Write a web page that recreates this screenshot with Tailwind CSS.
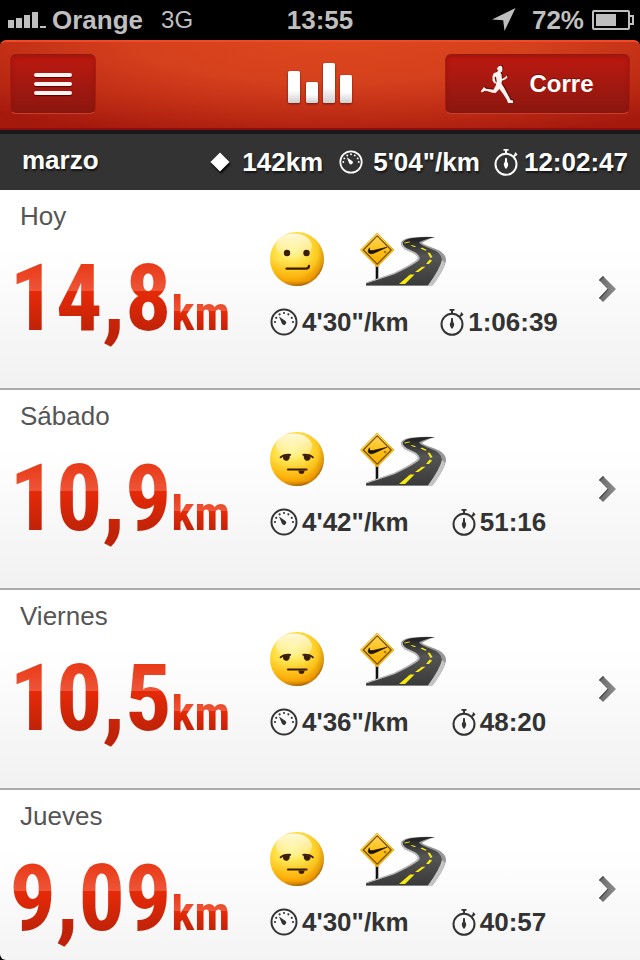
<!DOCTYPE html>
<html lang="es">
<head>
<meta charset="utf-8">
<meta name="viewport" content="width=device-width, initial-scale=1">
<title>Carreras</title>
<script src="https://cdn.jsdelivr.net/npm/@tailwindcss/browser@4"></script>
</head>
<body class="bg-black font-['Liberation_Sans',Arial,sans-serif]">
<svg class="absolute size-0" aria-hidden="true">
  <defs>
    <radialGradient id="ball" cx=".4" cy=".35" r=".66"><stop offset="0" stop-color="#fff27a"/><stop offset=".45" stop-color="#ffe24a"/><stop offset=".75" stop-color="#fbc81e"/><stop offset=".93" stop-color="#d9920c"/><stop offset="1" stop-color="#8a5206"/></radialGradient>
    <linearGradient id="glow" x1="0" y1="0" x2="0" y2="1"><stop offset=".5" stop-color="#ffa800" stop-opacity="0"/><stop offset=".9" stop-color="#ffa200" stop-opacity=".65"/><stop offset="1" stop-color="#b06a00" stop-opacity=".6"/></linearGradient>
    <linearGradient id="shine" x1="0" y1="0" x2="0" y2="1"><stop offset="0" stop-color="#fff" stop-opacity=".8"/><stop offset="1" stop-color="#fff" stop-opacity=".1"/></linearGradient>
    <linearGradient id="plate" x1="0" y1="0" x2="0" y2="1"><stop offset="0" stop-color="#ffd868"/><stop offset=".5" stop-color="#ffc21a"/><stop offset="1" stop-color="#f5a800"/></linearGradient>
    <linearGradient id="tar" x1="0" y1="0" x2="0" y2="1"><stop offset="0" stop-color="#1e1e1e"/><stop offset=".4" stop-color="#555"/><stop offset="1" stop-color="#3a3a3a"/></linearGradient>
    <linearGradient id="bar" x1="0" y1="0" x2="0" y2="1"><stop offset=".6" stop-color="#fff"/><stop offset="1" stop-color="#cfcfcf"/></linearGradient>
    <linearGradient id="arrow" x1="0" y1="0" x2="1" y2="0"><stop offset="0" stop-color="#6a6a6a"/><stop offset="1" stop-color="#8c8c8c"/></linearGradient>
  </defs>
  <symbol id="face" viewBox="0 0 54 54">
    <circle cx="27" cy="27" r="27" fill="url(#ball)"/><circle cx="27" cy="27" r="27" fill="url(#glow)"/>
    <ellipse cx="24" cy="14" rx="18" ry="12.500" fill="url(#shine)"/>
  </symbol>
  <symbol id="face-ok" viewBox="0 0 54 54">
    <use href="#face"/>
    <circle cx="17" cy="21" r="3.200" fill="#3a1c00"/><circle cx="36.500" cy="21" r="3.200" fill="#3a1c00"/>
    <path d="M16.500 36.700H36Q39 36.700 39 33.800" fill="none" stroke="#3a1c00" stroke-width="2.200" stroke-linecap="round"/>
  </symbol>
  <symbol id="face-tired" viewBox="0 0 54 54">
    <use href="#face"/>
    <path d="M10 25.800Q14 21.800 21 22.800M43.500 25.800Q39.500 21.800 32.500 22.800" fill="none" stroke="#3a1c00" stroke-width="1.800"/>
    <path d="M12.800 24.500Q16 22.500 19.800 23Q20 28.800 16.300 28.800Q13 28.800 12.800 24.500ZM40.700 24.500Q37.500 22.500 33.700 23Q33.500 28.800 37.200 28.800Q40.500 28.800 40.700 24.500Z" fill="#3a1c00"/>
    <path d="M18 37.500H36.500" stroke="#3a1c00" stroke-width="2.200" stroke-linecap="round"/>
    <path d="M28.500 38.500H34.500Q34.500 42 31.500 42T28.500 38.500" fill="#3a1c00"/>
  </symbol>
  <symbol id="road" viewBox="0 0 86 54">
    <path d="M17 33V47" stroke="#111" stroke-width="2.600"/>
    <path d="M6 50.500L34 41Q50 33 57 28Q60 25 54 21.500L45 17.500Q40 13 41 10.500Q43 6.800 50 5.800Q62 4 75 5Q66 8 62 10.800Q63 12.500 72 15.500Q86 20 86 28Q85.500 36 72.500 53.500H6Z" fill="#999"/>
    <path d="M6 51.500L34 42.500Q51 34.500 59 28.500Q61.500 25 56 21L46 16Q42 12.500 43 10.500Q45 7.300 51 6.300Q62 4.800 75 5Q63 7.500 59 10.500Q60 13 70 16.500Q82 20.500 82 28Q80 37 68 53.500H6Z" fill="url(#tar)"/>
    <path d="M82 28Q80 37 68 53.500H72Q83 40 85 31Z" fill="#c4c4c4"/>
    <path d="M6 51L34 41.500Q51 33.500 58 28.500" fill="none" stroke="#bbb" stroke-width="1"/>
    <path d="M41.500 11Q41.500 14.500 47 17.500L54.500 21Q59 24 58.500 27.500" fill="none" stroke="#bdbdbd" stroke-width="1.600"/>
    <path d="M39 52H45L54.500 42.500H50ZM55 40H58.500L65.500 34.700H62ZM66 32H69L72.200 28.500L69.500 27.500ZM70.500 26L72.500 25L69.800 20.700H67.500ZM65.500 18.700L66.800 18L62 15.500L60.500 16.500ZM55 15.300L55.800 14.300L51.500 12.900L51 13.800ZM44.500 11.600L50 10.300L49.800 9.500L44.500 10.500Z" fill="#f7ea12"/>
    <path d="M17.200 1L34 18L17.200 35L.5 18Z" fill="url(#plate)" stroke="#eeb11c" stroke-width="1" stroke-linejoin="round"/>
    <path d="M17.200 3.800L31.200 18L17.200 32.200L3.300 18Z" fill="none" stroke="#6b4c00" stroke-width="1.100" stroke-linejoin="round"/>
    <path d="M9.500 15.800Q6.500 20.500 10.200 21.700Q12 22.200 15 20.800L27 15.200L14 18.300Q8.500 19.500 9.500 15.800Z" fill="#1a1300" stroke="#1a1300" stroke-width=".6"/>
    <circle cx="25" cy="20" r="1.300" fill="#a87b00"/>
  </symbol>
  <symbol id="gauge" viewBox="0 0 28 28">
    <circle cx="14" cy="14" r="12.500" fill="none" stroke="currentColor" stroke-width="2"/>
    <path d="M9 8.500L15.800 13.200A2.300 2.300 0 1 1 12 15.800Z" fill="currentColor"/>
    <g fill="currentColor"><circle cx="5" cy="14" r="1.100"/><circle cx="6.200" cy="9.800" r="1.100"/><circle cx="9.600" cy="6.300" r="1.100"/><circle cx="14" cy="5" r="1.100"/><circle cx="18.400" cy="6.300" r="1.100"/><circle cx="21.800" cy="9.800" r="1.100"/><circle cx="23" cy="14" r="1.100"/></g>
  </symbol>
  <symbol id="watch" viewBox="0 0 24 28">
    <circle cx="12" cy="16.300" r="10.500" fill="none" stroke="currentColor" stroke-width="2"/>
    <path d="M9.500 1H14.500V2.800H13V5.500H11V2.800H9.500ZM19.200 7.500L21 5.700L20.300 5L21.600 4.200L23.500 6.500L22.500 7.500L20.600 9Z" fill="currentColor"/>
    <path d="M11.200 10H12.800L13.200 14Q14.800 15.800 14 17.700L12.700 20.500H11.300L10 17.700Q9.200 15.800 10.800 14Z" fill="currentColor"/>
  </symbol>
  <symbol id="chevron" viewBox="0 0 18 26">
    <path d="M5 0L18 13L5 26L1 22L9.500 13L1 4Z" fill="url(#arrow)"/>
    <path d="M1 4L5 0L6.200 1.200L1.800 5ZM1 22L9.500 13L10.800 13L2 23Z" fill="#4c4c4c"/>
  </symbol>
</svg>

<div class="flex h-screen flex-col overflow-hidden">
  <div class="grid h-10 shrink-0 grid-cols-[1fr_auto_1fr] items-center px-2 text-[26px] leading-10 font-bold text-[#bfbfbf]">
    <div class="flex items-center">
      <svg class="mr-1.5 h-4 w-[38px]" viewBox="0 0 38 16" fill="currentColor" aria-label="Cobertura"><path d="M0 8H6V16H0ZM8 6H14V16H8ZM16 3H22V16H16ZM24 0H30V16H24ZM32 14H38V16H32Z"/></svg>
      <span>Orange</span><span class="ml-[18px] text-2xl leading-10 font-normal">3G</span>
    </div>
    <span>13:55</span>
    <div class="flex items-center justify-end">
      <svg class="mr-4 size-6" viewBox="0 0 24 24" fill="currentColor" aria-label="Ubicación"><path d="M23.500 0L12.500 23L11.200 12.200L0 11.600Z"/></svg>
      <span>72%</span>
      <svg class="-mr-0.5 ml-2 h-5 w-[42px]" viewBox="0 0 42 20" fill="none" stroke="currentColor" stroke-width="2" aria-label="Batería"><rect x="1" y="1" width="36" height="18" rx="1"/><path d="M38 6H41V14H38"/><path d="M4 4H24V16H4Z" fill="currentColor" stroke="none"/></svg>
    </div>
  </div>

  <header class="grid h-[90px] shrink-0 grid-cols-[1fr_auto_1fr] items-start rounded-t-md border-t-2 border-b-2 border-t-[#f04a28] border-b-[#8b0e0e] bg-[radial-gradient(ellipse_75%_115%_at_52%_0%,#dc471f_0%,#d6411d_40%,#bd2b14_75%,#a5190d_100%)] px-2.5 pt-3">
    <button type="button" aria-label="Menú" class="flex h-[60px] w-[86px] items-center justify-center rounded-md border border-t-[#8f1a10] border-r-[#a81c12] border-b-[#c7402c] border-l-[#a81c12] bg-linear-to-b from-[#bd1910] to-[#8b170f] shadow-[inset_0_2px_4px_#7a0c0866]">
      <span class="flex w-[38px] flex-col gap-[5px]"><span class="h-1 rounded-xs bg-[#fff4f2] shadow-[0_1px_1px_#500]"></span><span class="h-1 rounded-xs bg-[#fff4f2] shadow-[0_1px_1px_#500]"></span><span class="h-1 rounded-xs bg-[#fff4f2] shadow-[0_1px_1px_#500]"></span></span>
    </button>
    <svg class="mt-2 h-[42px] w-16 drop-shadow-[0_1px_1px_#70180c]" viewBox="0 0 64 42" fill="url(#bar)" role="img" aria-label="Actividad"><rect y="9" width="12" height="32" rx="1.500"/><rect x="18" y="20" width="12" height="21" rx="1.500"/><rect x="35" y="1" width="12" height="40" rx="1.500"/><rect x="52" y="13" width="12" height="28" rx="1.500"/></svg>
    <button type="button" class="flex h-[60px] w-[185px] items-center justify-center gap-4 justify-self-end rounded-md border border-t-[#8f1a10] border-r-[#a81c12] border-b-[#c7402c] border-l-[#a81c12] bg-linear-to-b from-[#bd1910] to-[#8b170f] text-2xl font-bold text-white shadow-[inset_0_2px_4px_#7a0c0866] text-shadow-[0_-1px_0_#7a0c08]">
      <svg class="h-[38px] w-8 drop-shadow-[1px_-1px_0_#6b0c08]" viewBox="0 0 32 38" fill="#fff4f0" aria-hidden="true"><path d="M17.500 1.500Q19.500 0 21 1.500L21.500 4L21 6.500L19.500 7.500L20.500 9.500L21 14L24.500 12L25.500 10.500L26.500 12L25 14L21 15.800L20.500 18.500L23.500 23.500L27.500 31L29.500 35L32 35.500V38H27L26 35L22.500 29.500L18.500 24L14.500 28L11.500 27.800L6 26L3.500 26L.5 27.500L0 26L3 22L5 23.800L12.500 24.800L14.800 20.500L15.700 16L15 11.500L13.500 12.500L14.500 16.500L15.500 18L13.500 18.500L11.500 15.500L11.500 11L13 8L16 7L17.200 5.500L15.800 3.500Z"/></svg>
      Corre
    </button>
  </header>

  <section aria-label="Resumen del mes" class="flex h-[60px] shrink-0 items-center justify-between border-t-4 border-[#191919] bg-[#333] pr-3 pl-[22px] text-[26px] leading-[30px] font-bold text-white text-shadow-[1px_2px_2px_#0009]">
    <h1 class="pb-1">marzo</h1>
    <div class="flex items-center">
      <svg class="mr-3 size-5 drop-shadow-[1px_2px_1px_#000]" viewBox="0 0 20 20" fill="#fff" aria-hidden="true"><path d="M10 .5L19.500 10L10 19.500L.5 10Z"/></svg>
      <span class="mr-4">142km</span>
      <svg class="mr-2.5 size-6" aria-hidden="true"><use href="#gauge"/></svg>
      <span class="mr-3.5">5'04"/km</span>
      <svg class="mr-1.5 h-7 w-6" aria-hidden="true"><use href="#watch"/></svg>
      <span>12:02:47</span>
    </div>
  </section>

  <main class="min-h-0 flex-1 overflow-y-auto rounded-bl-md bg-white [scrollbar-width:none]">
    <ul>
      <li>
        <a href="#hoy" class="grid h-[200px] grid-cols-[250px_1fr_auto] border-b-2 border-[#aaa] bg-linear-to-b from-white from-30% to-[#f1f1f1] pr-6 pl-5">
          <div class="pr-10">
            <h2 class="pt-3 text-[26px] leading-7 text-[#555]">Hoy</h2>
            <p class="flex items-baseline justify-end font-['Roboto_Condensed','Liberation_Sans_Narrow',sans-serif] font-bold text-transparent"><span class="bg-[linear-gradient(#e83a18_34px,#ee5538_61px,#e62a08_61px,#bf2208_102px)] bg-clip-text text-[92px] leading-[138px]">14,8</span><span class="bg-[linear-gradient(#e83a18_10px,#ee5538_27px,#e62a08_27px,#bf2208_48px)] bg-clip-text text-5xl leading-[60px]">km</span></p>
          </div>
          <div class="pt-[42px] text-[#333]">
            <div class="flex gap-9"><svg class="size-[54px]" role="img" aria-label="Normal"><use href="#face-ok"/></svg><svg class="h-[54px] w-[86px]" role="img" aria-label="Carretera"><use href="#road"/></svg></div>
            <div class="mt-5 grid grid-cols-[140px_1fr] gap-x-5 text-[26px] leading-8 font-bold">
              <span class="flex items-center gap-1"><svg class="size-7 shrink-0" aria-hidden="true"><use href="#gauge"/></svg>4'30"/km</span>
              <span class="flex w-[138px] items-center justify-center gap-1"><svg class="h-7 w-6 shrink-0" aria-hidden="true"><use href="#watch"/></svg>1:06:39</span>
            </div>
          </div>
          <svg class="h-[26px] w-[18px] self-center" aria-hidden="true"><use href="#chevron"/></svg>
        </a>
      </li>
      <li>
        <a href="#sabado" class="grid h-[200px] grid-cols-[250px_1fr_auto] border-b-2 border-[#aaa] bg-linear-to-b from-white from-30% to-[#f1f1f1] pr-6 pl-5">
          <div class="pr-10">
            <h2 class="pt-3 text-[26px] leading-7 text-[#555]">Sábado</h2>
            <p class="flex items-baseline justify-end font-['Roboto_Condensed','Liberation_Sans_Narrow',sans-serif] font-bold text-transparent"><span class="bg-[linear-gradient(#e83a18_34px,#ee5538_61px,#e62a08_61px,#bf2208_102px)] bg-clip-text text-[92px] leading-[138px]">10,9</span><span class="bg-[linear-gradient(#e83a18_10px,#ee5538_27px,#e62a08_27px,#bf2208_48px)] bg-clip-text text-5xl leading-[60px]">km</span></p>
          </div>
          <div class="pt-[42px] text-[#333]">
            <div class="flex gap-9"><svg class="size-[54px]" role="img" aria-label="Cansado"><use href="#face-tired"/></svg><svg class="h-[54px] w-[86px]" role="img" aria-label="Carretera"><use href="#road"/></svg></div>
            <div class="mt-5 grid grid-cols-[140px_1fr] gap-x-5 text-[26px] leading-8 font-bold">
              <span class="flex items-center gap-1"><svg class="size-7 shrink-0" aria-hidden="true"><use href="#gauge"/></svg>4'42"/km</span>
              <span class="flex w-[138px] items-center justify-center gap-1"><svg class="h-7 w-6 shrink-0" aria-hidden="true"><use href="#watch"/></svg>51:16</span>
            </div>
          </div>
          <svg class="h-[26px] w-[18px] self-center" aria-hidden="true"><use href="#chevron"/></svg>
        </a>
      </li>
      <li>
        <a href="#viernes" class="grid h-[200px] grid-cols-[250px_1fr_auto] border-b-2 border-[#aaa] bg-linear-to-b from-white from-30% to-[#f1f1f1] pr-6 pl-5">
          <div class="pr-10">
            <h2 class="pt-3 text-[26px] leading-7 text-[#555]">Viernes</h2>
            <p class="flex items-baseline justify-end font-['Roboto_Condensed','Liberation_Sans_Narrow',sans-serif] font-bold text-transparent"><span class="bg-[linear-gradient(#e83a18_34px,#ee5538_61px,#e62a08_61px,#bf2208_102px)] bg-clip-text text-[92px] leading-[138px]">10,5</span><span class="bg-[linear-gradient(#e83a18_10px,#ee5538_27px,#e62a08_27px,#bf2208_48px)] bg-clip-text text-5xl leading-[60px]">km</span></p>
          </div>
          <div class="pt-[42px] text-[#333]">
            <div class="flex gap-9"><svg class="size-[54px]" role="img" aria-label="Cansado"><use href="#face-tired"/></svg><svg class="h-[54px] w-[86px]" role="img" aria-label="Carretera"><use href="#road"/></svg></div>
            <div class="mt-5 grid grid-cols-[140px_1fr] gap-x-5 text-[26px] leading-8 font-bold">
              <span class="flex items-center gap-1"><svg class="size-7 shrink-0" aria-hidden="true"><use href="#gauge"/></svg>4'36"/km</span>
              <span class="flex w-[138px] items-center justify-center gap-1"><svg class="h-7 w-6 shrink-0" aria-hidden="true"><use href="#watch"/></svg>48:20</span>
            </div>
          </div>
          <svg class="h-[26px] w-[18px] self-center" aria-hidden="true"><use href="#chevron"/></svg>
        </a>
      </li>
      <li>
        <a href="#jueves" class="grid h-[200px] grid-cols-[250px_1fr_auto] border-b-2 border-[#aaa] bg-linear-to-b from-white from-30% to-[#f1f1f1] pr-6 pl-5">
          <div class="pr-10">
            <h2 class="pt-3 text-[26px] leading-7 text-[#555]">Jueves</h2>
            <p class="flex items-baseline justify-end font-['Roboto_Condensed','Liberation_Sans_Narrow',sans-serif] font-bold text-transparent"><span class="bg-[linear-gradient(#e83a18_34px,#ee5538_61px,#e62a08_61px,#bf2208_102px)] bg-clip-text text-[92px] leading-[138px]">9,09</span><span class="bg-[linear-gradient(#e83a18_10px,#ee5538_27px,#e62a08_27px,#bf2208_48px)] bg-clip-text text-5xl leading-[60px]">km</span></p>
          </div>
          <div class="pt-[42px] text-[#333]">
            <div class="flex gap-9"><svg class="size-[54px]" role="img" aria-label="Cansado"><use href="#face-tired"/></svg><svg class="h-[54px] w-[86px]" role="img" aria-label="Carretera"><use href="#road"/></svg></div>
            <div class="mt-5 grid grid-cols-[140px_1fr] gap-x-5 text-[26px] leading-8 font-bold">
              <span class="flex items-center gap-1"><svg class="size-7 shrink-0" aria-hidden="true"><use href="#gauge"/></svg>4'30"/km</span>
              <span class="flex w-[138px] items-center justify-center gap-1"><svg class="h-7 w-6 shrink-0" aria-hidden="true"><use href="#watch"/></svg>40:57</span>
            </div>
          </div>
          <svg class="h-[26px] w-[18px] self-center" aria-hidden="true"><use href="#chevron"/></svg>
        </a>
      </li>
    </ul>
  </main>
</div>
</body>
</html>
